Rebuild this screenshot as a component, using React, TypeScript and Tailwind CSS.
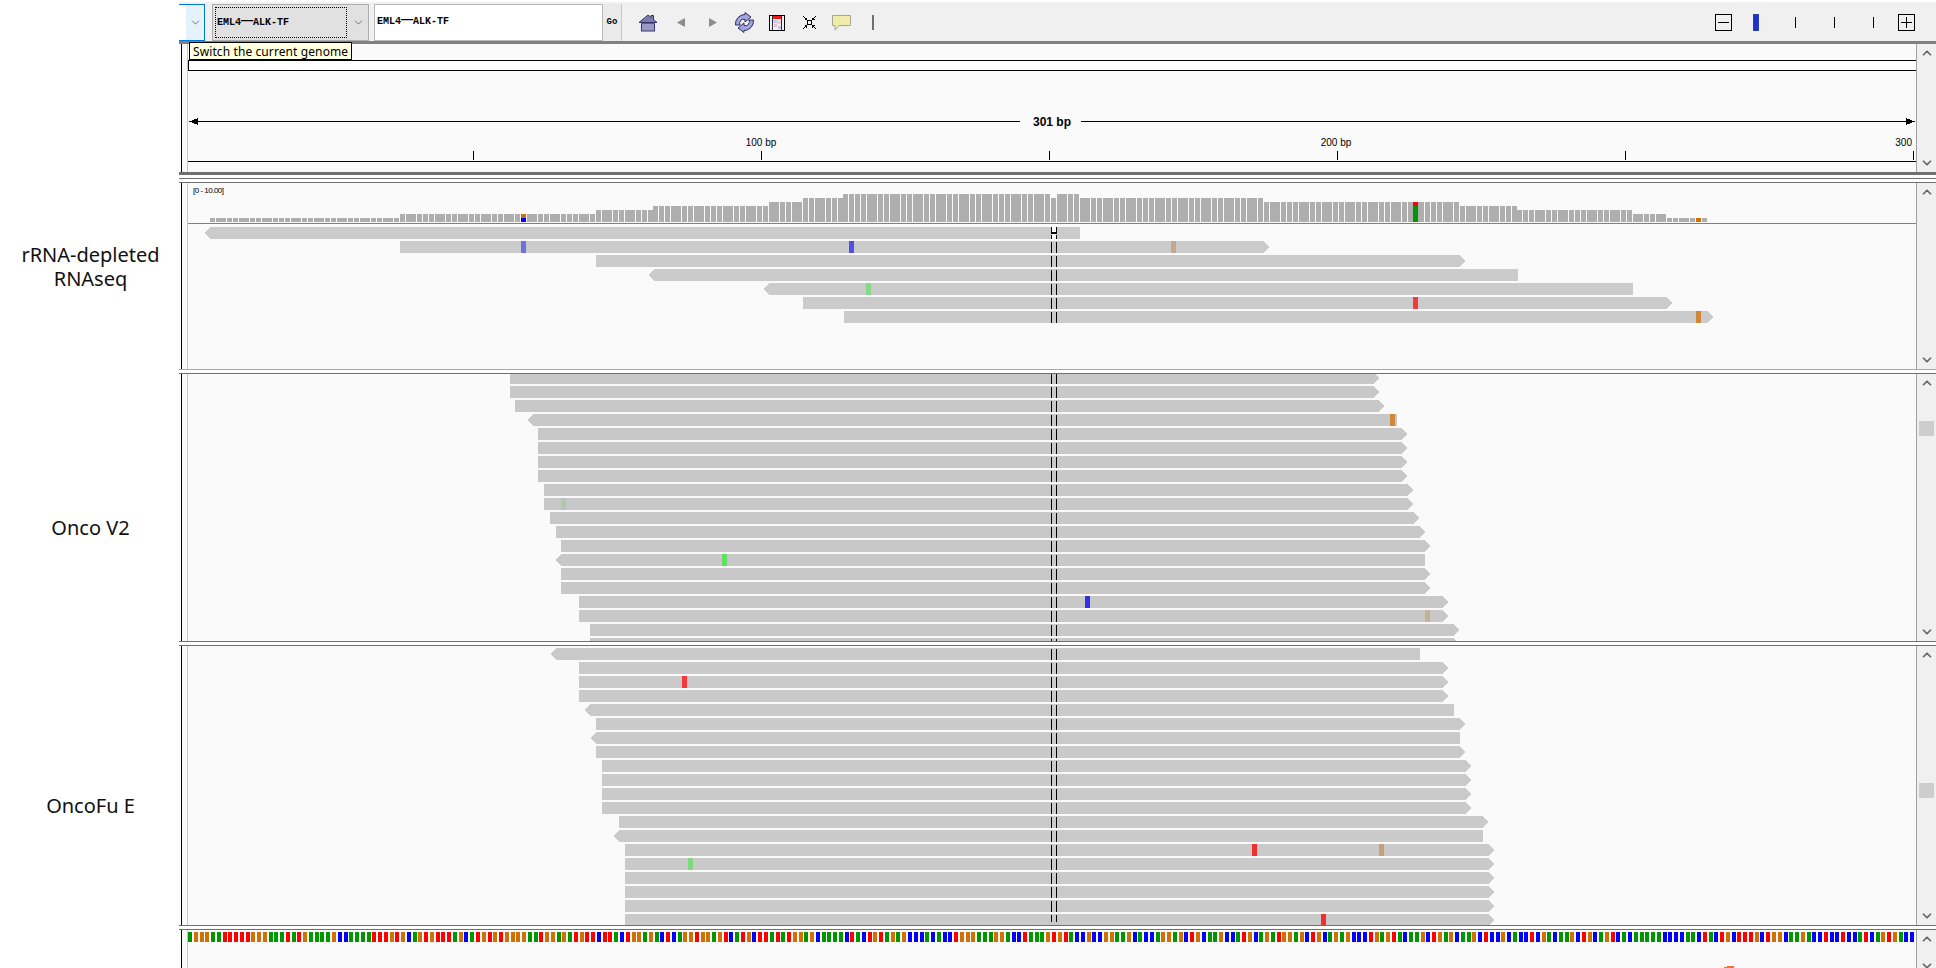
import React from 'react';
import { ChevronDown, ChevronUp } from 'lucide-react';

type Mismatch = [number, string];
type Read = { l: number; r: number; dir?: 'L' | 'R'; m?: Mismatch[] };

const BASE_COLORS: Record<string, string> = { A: '#009600', C: '#0000ff', G: '#d17105', T: '#ff0000' };

const SEQUENCE =
  'AGGGAATTTTTGGGAAATATGAAAAGCCAAAATTTGTGCAGTGTTTAGCA' +
  'TGTG' +
  'TGGGGAATGGAGATGTTCTTACTGGAGACTCAGGTGGAGTCATGCTTATATGGAGCAAAACTACTGTAGAGCCCACACCTGGGAAAGGACCTAAAGTGTACCGCC' +
  'GGAAGCACCAGGAGCTGCAAGCCATGCAGATGGAGCTGCAGAGCCCTGAGTACAAGCTGAGCAAGCTCCGCACCTCGA' +
  'CAAGCTGCAGTCACAAA' +
  'AACCCCAACTACTGCTTTGCTGGCAAGACCTCCTCCATCAGTGACC';

// x of a base column in the coverage track
const colX = (i: number) => 192.6 + i * 5.76;

function coverageAt(x: number) {
  if (x < 400) return 1;
  if (x < 596) return 2;
  if (x < 654) return 3;
  if (x < 769) return 4;
  if (x < 803) return 5;
  if (x < 843) return 6;
  if (x < 1078) return 7;
  if (x < 1263) return 6;
  if (x < 1458) return 5;
  if (x < 1517) return 4;
  if (x < 1632) return 3;
  if (x < 1666) return 2;
  return 1;
}

const rnaReads: Read[] = [
  { l: 210, r: 1080, dir: 'L' },
  { l: 400, r: 1269, dir: 'R', m: [[521, '#6f6fe0'], [849, '#5050e8'], [1171, '#c8a888']] },
  { l: 596, r: 1465, dir: 'R' },
  { l: 654, r: 1518, dir: 'L' },
  { l: 769, r: 1633, dir: 'L', m: [[866, '#88d888']] },
  { l: 803, r: 1672, dir: 'R', m: [[1413, '#f83838']] },
  { l: 844, r: 1713, dir: 'R', m: [[1696, '#d08838']] },
];

const oncoV2Reads: Read[] = [
  { l: 510, r: 1379, dir: 'R' },
  { l: 510, r: 1379, dir: 'R' },
  { l: 515, r: 1384, dir: 'R' },
  { l: 533, r: 1397, dir: 'L', m: [[1390, '#d08838']] },
  { l: 538, r: 1407, dir: 'R' },
  { l: 538, r: 1407, dir: 'R' },
  { l: 538, r: 1407, dir: 'R' },
  { l: 538, r: 1407, dir: 'R' },
  { l: 544, r: 1413, dir: 'R' },
  { l: 544, r: 1413, dir: 'R', m: [[561, '#b0c8b0']] },
  { l: 550, r: 1419, dir: 'R' },
  { l: 556, r: 1425, dir: 'R' },
  { l: 561, r: 1430, dir: 'R' },
  { l: 561, r: 1425, dir: 'L', m: [[722, '#60e060']] },
  { l: 561, r: 1430, dir: 'R' },
  { l: 561, r: 1430, dir: 'R' },
  { l: 579, r: 1448, dir: 'R', m: [[1085, '#3030f0']] },
  { l: 579, r: 1448, dir: 'R', m: [[1425, '#c8b098']] },
  { l: 590, r: 1459, dir: 'R' },
  { l: 590, r: 1459, dir: 'R' },
];

const oncoFuReads: Read[] = [
  { l: 556, r: 1420, dir: 'L' },
  { l: 579, r: 1448, dir: 'R' },
  { l: 579, r: 1448, dir: 'R', m: [[682, '#f83838']] },
  { l: 579, r: 1448, dir: 'R' },
  { l: 590, r: 1454, dir: 'L' },
  { l: 596, r: 1465, dir: 'R' },
  { l: 596, r: 1460, dir: 'L' },
  { l: 596, r: 1465, dir: 'R' },
  { l: 602, r: 1471, dir: 'R' },
  { l: 602, r: 1471, dir: 'R' },
  { l: 602, r: 1471, dir: 'R' },
  { l: 602, r: 1471, dir: 'R' },
  { l: 619, r: 1488, dir: 'R' },
  { l: 619, r: 1483, dir: 'L' },
  { l: 625, r: 1494, dir: 'R', m: [[1252, '#f03030'], [1379, '#c8a078']] },
  { l: 625, r: 1494, dir: 'R', m: [[688, '#80d880']] },
  { l: 625, r: 1494, dir: 'R' },
  { l: 625, r: 1494, dir: 'R' },
  { l: 625, r: 1494, dir: 'R' },
  { l: 625, r: 1494, dir: 'R', m: [[1321, '#f03030']] },
];

function Reads({ reads, top, color = '#c8c8c8' }: { reads: Read[]; top: number; color?: string }) {
  return (
    <>
      {reads.map((read, i) => {
        const y = top + i * 14;
        const left = read.dir === 'L' ? read.l - 5 : read.l;
        let points = `${read.l},${y} ${read.r},${y} ${read.r},${y + 12} ${read.l},${y + 12}`;
        if (read.dir === 'L') {
          points = `${left},${y + 6} ${read.l},${y} ${read.r},${y} ${read.r},${y + 12} ${read.l},${y + 12}`;
        } else if (read.dir === 'R') {
          points = `${read.l},${y} ${read.r - 5},${y} ${read.r},${y + 6} ${read.r - 5},${y + 12} ${read.l},${y + 12}`;
        }
        return (
          <g key={i}>
            <polygon points={points} fill={color} />
            {read.m?.map(([x, c]) => <rect key={x} x={x} y={y} width={5} height={12} fill={c} />)}
          </g>
        );
      })}
    </>
  );
}

function CenterLines({ from, to }: { from: number; to: number }) {
  return (
    <>
      <line x1={1051.5} x2={1051.5} y1={from} y2={to} stroke="#000" strokeDasharray="11 3" />
      <line x1={1056.5} x2={1056.5} y1={from} y2={to} stroke="#000" strokeDasharray="11 3" />
    </>
  );
}

function Scrollbar({ thumbTop, height }: { thumbTop?: number; height?: number }) {
  return (
    <div className="relative w-[19px] shrink-0 bg-[#f0f0f0]">
      <div className="flex h-full flex-col items-center justify-between py-[2px]" style={height ? { height } : undefined}>
        <ChevronUp size={14} strokeWidth={3} color="#666666" />
        <ChevronDown size={14} strokeWidth={3} color="#666666" />
      </div>
      {thumbTop !== undefined && (
        <div className="absolute left-[2px] h-[15px] w-[15px] bg-[#cdcdcd]" style={{ top: thumbTop }} />
      )}
    </div>
  );
}

function TrackRow({
  top,
  height,
  label,
  thumbTop,
  barHeight,
  children,
}: {
  top: number;
  height: number;
  label?: React.ReactNode;
  thumbTop?: number;
  barHeight?: number;
  children: React.ReactNode;
}) {
  return (
    <div className="flex shrink-0 overflow-hidden" style={{ height }}>
      <div className="flex w-[181px] shrink-0 items-center justify-center bg-white text-center font-['Noto_Sans',sans-serif] text-[20px] leading-[24px] text-[#111]">
        {label}
      </div>
      <div className="w-px shrink-0 bg-black" />
      <div className="w-[5px] shrink-0 bg-[#fafafa]" />
      <div className="w-px shrink-0 bg-[#c8c8c8]" />
      <svg
        className="w-[1728px] shrink-0 bg-[#fafafa]"
        height={height}
        viewBox={`188 ${top} 1728 ${height}`}
        shapeRendering="crispEdges"
      >
        {children}
      </svg>
      <div className="w-px shrink-0 bg-[#a0a0a0]" />
      <Scrollbar thumbTop={thumbTop} height={barHeight} />
    </div>
  );
}

function PanelGap({ first = '#707070' }: { first?: string }) {
  return (
    <div className="ml-[179px] flex h-[5px] shrink-0 flex-col justify-between">
      <div className="h-px" style={{ background: first }} />
      <div className="h-px bg-[#707070]" />
    </div>
  );
}

function LocusText() {
  return (
    <span className="whitespace-nowrap font-['Liberation_Mono',monospace] text-[10px] font-bold text-black">
      EML4<span className="relative top-[1px] text-[20px] font-normal leading-[0]">—</span>ALK-TF
    </span>
  );
}

function HomeIcon() {
  return (
    <svg width="20" height="18" viewBox="0 0 20 18" className="ml-[16px] shrink-0">
      <rect x="3.5" y="8" width="13" height="9" fill="#9a9ac4" stroke="#34346a" />
      <path d="M1 8.5 L10 1 L13 3.4 V1.5 H15.5 V5.5 L19 8.5 Z" fill="#7c7cac" stroke="#34346a" strokeLinejoin="round" />
      <line x1="3" y1="9.5" x2="17" y2="9.5" stroke="#5c5c90" />
    </svg>
  );
}

function RefreshIcon() {
  const arc = 'M1.5 13 A9.5 9.5 0 0 1 11 2.5 L11 0.5 L17 5 L11 10 L11 7.5 A4 4 0 0 0 6 13 Z';
  return (
    <svg width="21" height="21" viewBox="0 0 21 21" className="ml-[17px] shrink-0">
      <path d={arc} fill="#a4a4dc" stroke="#2c2c60" strokeLinejoin="round" />
      <path d={arc} fill="#a4a4dc" stroke="#2c2c60" strokeLinejoin="round" transform="rotate(180 10.5 10.5)" />
    </svg>
  );
}

function RegionIcon() {
  return (
    <svg width="16" height="16" viewBox="0 0 16 16" className="ml-[14px] shrink-0" shapeRendering="crispEdges">
      <rect x="0.5" y="0.5" width="15" height="15" fill="#f0f0f8" stroke="#000" />
      <rect x="3" y="1" width="10" height="3" fill="#f01818" />
      <rect x="4" y="5" width="4" height="3" fill="#c8c8f0" />
      <rect x="8" y="6" width="4" height="3" fill="#f0c8d0" />
      <rect x="5" y="9" width="3" height="3" fill="#f0c0c8" />
      <rect x="9" y="11" width="3" height="3" fill="#c0c8f0" />
      <line x1="3.5" y1="1" x2="3.5" y2="15" stroke="#303030" />
      <line x1="12.5" y1="1" x2="12.5" y2="15" stroke="#303030" />
    </svg>
  );
}

function CollapseIcon() {
  return (
    <svg width="13" height="13" viewBox="0 0 13 13" className="ml-[18px] shrink-0" shapeRendering="crispEdges">
      <rect x="4.5" y="4.5" width="4" height="4" fill="none" stroke="#000" />
      <path d="M0 0 L3.5 3.5 M13 0 L9.5 3.5 M0 13 L3.5 9.5 M13 13 L9.5 9.5" stroke="#000" />
      <path d="M1.5 3.5 H3.5 V1.5 M9.5 1.5 V3.5 H11.5 M1.5 9.5 H3.5 V11.5 M9.5 11.5 V9.5 H11.5" stroke="#000" fill="none" />
    </svg>
  );
}

export default function App() {
  return (
    <div className="relative flex h-[968px] w-[1936px] flex-col overflow-hidden bg-white">
      <div className="h-[2px] shrink-0" />

      {/* toolbar */}
      <div className="ml-[179px] flex h-[39px] shrink-0 items-center bg-[#f0f0f0] pt-[2px]">
        <div className="flex h-[37px] w-[26px] shrink-0 border border-l-0 border-[#0078d7] bg-white">
          <div className="w-[7px] shrink-0" />
          <div className="flex flex-1 items-center justify-center bg-[#e5f1fb]">
            <ChevronDown size={13} strokeWidth={1.25} color="#404040" />
          </div>
        </div>
        <div className="ml-[7px] flex h-[37px] w-[157px] shrink-0 border border-[#adadad] bg-[#e1e1e1]">
          <div className="m-[2px] flex flex-1 items-center border border-dotted border-black pl-[1px]">
            <LocusText />
          </div>
          <div className="flex w-[19px] shrink-0 items-center justify-center">
            <ChevronDown size={13} strokeWidth={1.25} color="#404040" />
          </div>
        </div>
        <div className="ml-[5px] flex h-[37px] w-[229px] shrink-0 items-center border border-[#b8b8b8] bg-white pb-[3px] pl-[2px]">
          <LocusText />
        </div>
        <div className="flex h-[37px] w-[19px] shrink-0 items-center justify-center border-r border-[#c8c8c8] bg-[#eaeaea] font-['Liberation_Mono',monospace] text-[9px] font-bold text-black">
          Go
        </div>
        <HomeIcon />
        <svg width="8" height="9" viewBox="0 0 8 9" className="ml-[19px] shrink-0">
          <polygon points="8,0 8,9 0,4.5" fill="#8c8c8c" />
        </svg>
        <svg width="8" height="9" viewBox="0 0 8 9" className="ml-[24px] shrink-0">
          <polygon points="0,0 0,9 8,4.5" fill="#8c8c8c" />
        </svg>
        <RefreshIcon />
        <RegionIcon />
        <CollapseIcon />
        <svg width="19" height="16" viewBox="0 0 19 16" className="ml-[16px] shrink-0">
          <path d="M0.5 0.5 H18.5 V10.5 H7 L3 15 V10.5 H0.5 Z" fill="#f0ecaa" stroke="#a8a890" />
        </svg>
        <div className="ml-[21px] h-[15px] w-[2px] shrink-0 bg-[#707070]" />
        <div className="flex-1" />
        <div className="flex h-[17px] w-[17px] shrink-0 items-center justify-center border border-black bg-[#f0f0f0]">
          <div className="h-px w-[11px] bg-black" />
        </div>
        <div className="ml-[21px] h-[17px] w-[6px] shrink-0 border border-[#2a40b0] bg-[#1a30d0]" />
        <div className="ml-[36px] h-[11px] w-px shrink-0 bg-black" />
        <div className="ml-[38px] h-[11px] w-px shrink-0 bg-black" />
        <div className="ml-[38px] h-[11px] w-px shrink-0 bg-black" />
        <div className="relative ml-[24px] mr-[21px] flex h-[17px] w-[17px] shrink-0 items-center justify-center border border-black bg-[#f0f0f0]">
          <div className="h-px w-[11px] bg-black" />
          <div className="absolute h-[11px] w-px bg-black" />
        </div>
      </div>
      <div className="ml-[179px] h-[3px] shrink-0 bg-[#808080]" />

      {/* ruler */}
      <TrackRow top={44} height={128}>
        <rect x={188} y={60.5} width={1728} height={10} fill="#ffffff" stroke="#000" />
        <line x1={189} x2={1020} y1={121.5} y2={121.5} stroke="#000" />
        <line x1={1081} x2={1915} y1={121.5} y2={121.5} stroke="#000" />
        <polygon points="189,121.5 198,118 198,125" fill="#000" />
        <polygon points="1915,121.5 1906,118 1906,125" fill="#000" />
        <text x={1052} y={126} textAnchor="middle" className="font-['Liberation_Sans',sans-serif] text-[12px] font-bold" shapeRendering="auto">
          301 bp
        </text>
        {[473, 761, 1049, 1337, 1625, 1913].map(x => (
          <line key={x} x1={x + 0.5} x2={x + 0.5} y1={151} y2={160} stroke="#000" />
        ))}
        <text x={761} y={146} textAnchor="middle" className="font-['Liberation_Sans',sans-serif] text-[10px]">100 bp</text>
        <text x={1336} y={146} textAnchor="middle" className="font-['Liberation_Sans',sans-serif] text-[10px]">200 bp</text>
        <text x={1912} y={146} textAnchor="end" className="font-['Liberation_Sans',sans-serif] text-[10px]">300</text>
        <line x1={188} x2={1916} y1={161.5} y2={161.5} stroke="#000" />
      </TrackRow>

      <div className="ml-[179px] flex h-[11px] shrink-0 flex-col">
        <div className="h-[3px] bg-[#707070]" />
        <div className="mt-[3px] h-px bg-[#707070]" />
        <div className="mt-[3px] h-px bg-[#707070]" />
      </div>

      {/* rRNA-depleted RNAseq */}
      <TrackRow
        top={183}
        height={186}
        label={<span className="block pb-[18px]">rRNA-depleted<br />RNAseq</span>}
      >
        <text x={193} y={193} className="font-['Liberation_Sans',sans-serif] text-[8px] tracking-[-0.5px]">[0 - 10.00]</text>
        {Array.from({ length: 262 }, (_, i) => {
          const n = i + 3;
          const x = colX(n);
          if (x > 1706) return null;
          let reads = coverageAt(x + 2);
          if (n === 149) reads = 6;
          return <rect key={n} x={x} y={222 - reads * 4} width={5} height={reads * 4} fill="#aeaeae" />;
        })}
        <rect x={colX(57)} y={214} width={5} height={4} fill="#d17105" />
        <rect x={colX(57)} y={218} width={5} height={4} fill="#0000ff" />
        <rect x={1413} y={202} width={5} height={4} fill="#ff0000" />
        <rect x={1413} y={206} width={5} height={16} fill="#009600" />
        <rect x={1696} y={218} width={5} height={4} fill="#d17105" />
        <line x1={188} x2={1916} y1={223.5} y2={223.5} stroke="#808080" />
        <Reads reads={rnaReads} top={227} color="#cbcbcb" />
        <rect x={1052} y={227} width={4} height={14} fill="#fafafa" />
        <rect x={1052} y={232} width={4} height={2} fill="#000" />
        <line x1={1051.5} x2={1051.5} y1={227} y2={234} stroke="#000" />
        <line x1={1056.5} x2={1056.5} y1={227} y2={234} stroke="#000" />
        <line x1={1051.5} x2={1051.5} y1={235} y2={239} stroke="#000" />
        <line x1={1056.5} x2={1056.5} y1={235} y2={239} stroke="#000" />
        <CenterLines from={242} to={324} />
      </TrackRow>
      <PanelGap first="#a8a8a8" />

      {/* Onco V2 */}
      <TrackRow
        top={374}
        height={267}
        thumbTop={47}
        label={<span className="block pt-[40px]">Onco V2</span>}
      >
        <Reads reads={oncoV2Reads} top={372} />
        <CenterLines from={373} to={641} />
      </TrackRow>
      <PanelGap />

      {/* OncoFu E */}
      <TrackRow
        top={646}
        height={279}
        thumbTop={137}
        label={<span className="block pt-[40px]">OncoFu E</span>}
      >
        <Reads reads={oncoFuReads} top={648} color="#cacaca" />
        <CenterLines from={635} to={922} />
      </TrackRow>
      <PanelGap />

      {/* reference sequence */}
      <TrackRow top={930} height={38} barHeight={45}>
        {SEQUENCE.split('').map((base, i) => (
          <rect key={i} x={188 + i * 5.76} y={932} width={4} height={10} fill={BASE_COLORS[base]} />
        ))}
        <path d="M1723 968 Q1728 965.5 1734 966 L1734 968 Z" fill="#f07030" />
      </TrackRow>

      {/* tooltip over the ruler */}
      <div className="absolute left-[189px] top-[42px] flex h-[18px] w-[163px] items-center whitespace-nowrap border border-black bg-[#ffffe1] pl-[3px] pt-px font-['Noto_Sans',sans-serif] text-[12px] tracking-[0.1px] text-black">
        Switch the current genome
      </div>
    </div>
  );
}
